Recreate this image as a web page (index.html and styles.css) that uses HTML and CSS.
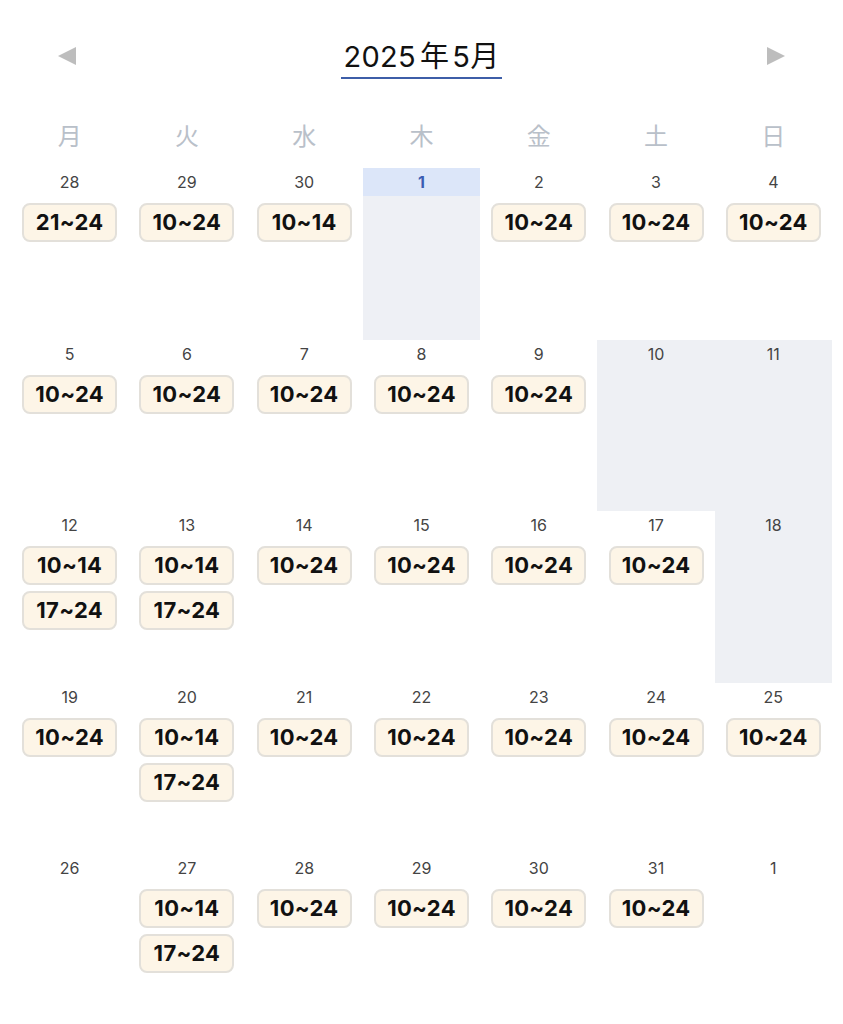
FILE: index.html
```html
<!DOCTYPE html>
<html lang="ja">
<head>
<meta charset="utf-8">
<title>2025年5月</title>
<link rel="stylesheet" href="styles.css">
</head>
<body>
  <div class="header">
    <span class="arrow"><svg width="20" height="20" viewBox="0 0 20 20"><polygon points="1,10 19,1 19,19" fill="#bdbdbd"/></svg></span>
    <h1 class="title">2025<span class="kanji">年</span>5月</h1>
    <span class="arrow"><svg width="20" height="20" viewBox="0 0 20 20"><polygon points="19,10 1,1 1,19" fill="#bdbdbd"/></svg></span>
  </div>

  <div class="weekdays">
    <div>月</div><div>火</div><div>水</div><div>木</div><div>金</div><div>土</div><div>日</div>
  </div>

  <div class="month" id="month"></div>

<script>
var days = [
  ["28", ["21~24"]], ["29", ["10~24"]], ["30", ["10~14"]], ["1", [], "today"], ["2", ["10~24"]], ["3", ["10~24"]], ["4", ["10~24"]],
  ["5", ["10~24"]], ["6", ["10~24"]], ["7", ["10~24"]], ["8", ["10~24"]], ["9", ["10~24"]], ["10", [], "off"], ["11", [], "off"],
  ["12", ["10~14", "17~24"]], ["13", ["10~14", "17~24"]], ["14", ["10~24"]], ["15", ["10~24"]], ["16", ["10~24"]], ["17", ["10~24"]], ["18", [], "off"],
  ["19", ["10~24"]], ["20", ["10~14", "17~24"]], ["21", ["10~24"]], ["22", ["10~24"]], ["23", ["10~24"]], ["24", ["10~24"]], ["25", ["10~24"]],
  ["26", []], ["27", ["10~14", "17~24"]], ["28", ["10~24"]], ["29", ["10~24"]], ["30", ["10~24"]], ["31", ["10~24"]], ["1", []]
];

var month = document.getElementById("month");
days.forEach(function (d) {
  var cell = document.createElement("div");
  cell.className = "day" + (d[2] ? " " + d[2] : "");
  var num = document.createElement("div");
  num.className = "num";
  num.textContent = d[0];
  cell.appendChild(num);
  d[1].forEach(function (t) {
    var chip = document.createElement("div");
    chip.className = "shift";
    chip.textContent = t;
    cell.appendChild(chip);
  });
  month.appendChild(cell);
});
</script>
</body>
</html>
```

FILE: styles.css
```css
* {
  margin: 0;
  padding: 0;
  box-sizing: border-box;
}

body {
  font-family: "Inter", "Noto Sans", "Noto Sans CJK JP", sans-serif;
  background: #fff;
  color: #222;
  padding: 0 11px;
}

.header {
  display: flex;
  justify-content: space-between;
  align-items: center;
  padding: 36px 46px 0 46px;
}

.arrow {
  display: flex;
  width: 20px;
  height: 20px;
  margin-top: -4px;
}

.title {
  font-family: "Inter", "Noto Sans CJK JP", sans-serif;
  font-weight: 400;
  font-size: 29px;
  line-height: 36px;
  letter-spacing: 0.3px;
  color: #111;
  padding: 3px 2px 2px 2px;
  border-bottom: 2px solid #3d5ea8;
}

.title .kanji {
  font-family: "Noto Sans CJK JP", sans-serif;
  line-height: 1;
  padding: 0 3px 0 4px;
}

.weekdays {
  display: grid;
  grid-template-columns: repeat(7, 1fr);
  margin-top: 36px;
  margin-bottom: 13px;
}

.weekdays div {
  text-align: center;
  font-family: "Noto Sans CJK JP", sans-serif;
  font-size: 24px;
  line-height: 40px;
  color: #b9c0c9;
}

.month {
  display: grid;
  grid-template-columns: repeat(7, 1fr);
  grid-auto-rows: 171.5px;
}

.day {
  display: flex;
  flex-direction: column;
  align-items: center;
  gap: 6px;
}

.day.off {
  background: #eef0f4;
}

.day.today {
  background: #eef0f5;
}

.num {
  align-self: stretch;
  height: 28px;
  line-height: 28px;
  text-align: center;
  font-size: 16px;
  color: #444;
  margin-bottom: 1px;
}

.today .num {
  background: #dce6f9;
  color: #3a5cb3;
  font-weight: 700;
}

.shift {
  width: 95px;
  height: 39px;
  line-height: 35px;
  text-align: center;
  border: 2px solid #e3e0da;
  border-radius: 8px;
  background: #fdf5e7;
  font-size: 22px;
  font-weight: 700;
  letter-spacing: 0.3px;
  color: #111;
}
```
